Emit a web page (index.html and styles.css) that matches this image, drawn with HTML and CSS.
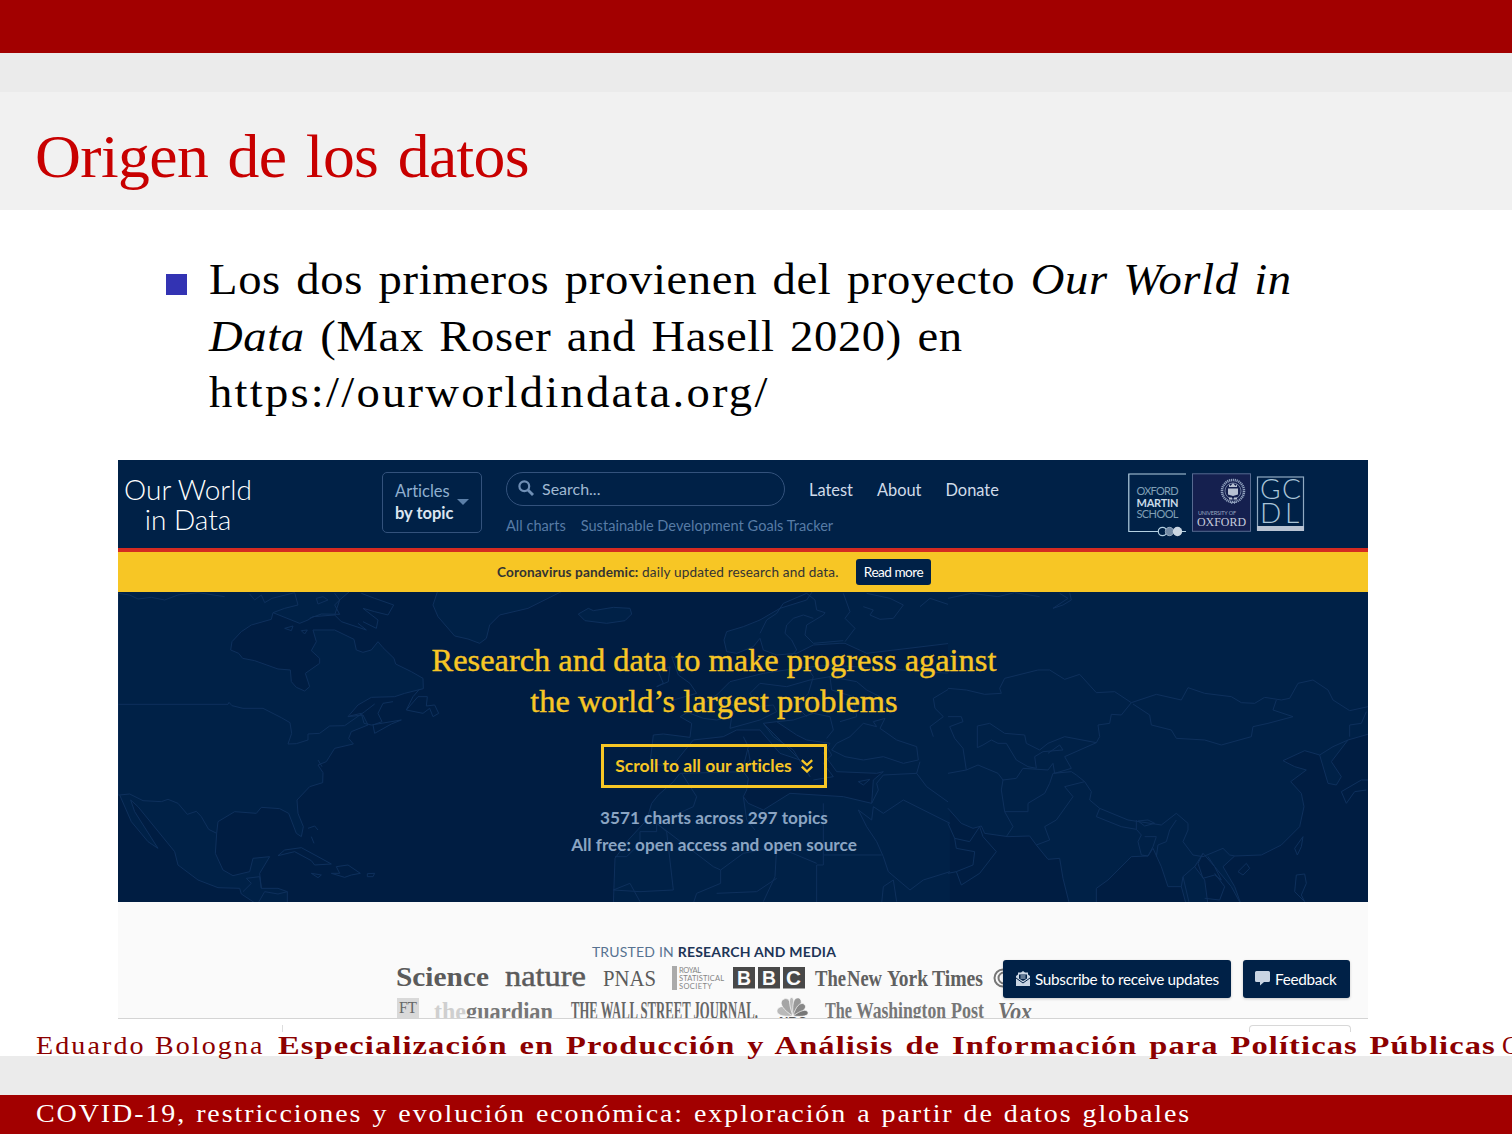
FILE: index.html
```html
<!DOCTYPE html>
<html lang="es">
<head>
<meta charset="utf-8">
<title>Origen de los datos</title>
<link rel="stylesheet" href="styles.css">
</head>
<body>
<main class="slide">
  <div class="bar-top"></div>
  <div class="bar-sub"></div>
  <header class="title-band"><h1>Origen de los datos</h1></header>

  <section class="content">
    <span class="bullet"></span>
    <p class="statement">
      <span class="line l1">Los dos primeros provienen del proyecto <em>Our World in</em></span>
      <span class="line l2"><em>Data</em> (Max Roser and Hasell 2020) en</span>
      <span class="line l3">https://ourworldindata.org/</span>
    </p>
  </section>

  <section class="site">
    <div class="site-head">
      <div class="brand">Our World<br>in Data</div>
      <div class="topic">
        <div class="topic-text"><span>Articles</span><b>by topic</b></div>
        <svg class="caret" width="12" height="6" viewBox="0 0 12 6"><path d="M0 0h12L6 6z" fill="#5b7fa8"/></svg>
      </div>
      <div class="search-col">
        <div class="search">
          <svg width="16" height="16" viewBox="0 0 16 16" fill="none" stroke="#6f8fb5"><circle cx="6.3" cy="6.3" r="4.9" stroke-width="2.2"/><path d="M10 10l5 5" stroke-width="2.8"/></svg>
          <span>Search...</span>
        </div>
        <div class="sub"><span class="charts">All charts</span><span class="sdg">Sustainable Development Goals Tracker</span></div>
      </div>
      <nav class="nav"><span>Latest</span><span>About</span><span>Donate</span></nav>
      <svg class="partners" width="178" height="66" viewBox="0 0 178 66">
        <g fill="none" stroke="#b4d0e2" stroke-width="1.2"><path d="M58 1H.8V58.500H30M54 58.500h4"/><circle cx="34.500" cy="58.500" r="4.200"/></g>
        <circle cx="41.500" cy="58.500" r="4.200" fill="#738aa5" stroke="#b4c5d5" stroke-width=".7"/>
        <circle cx="49.500" cy="58.500" r="4.700" fill="#cbd6e2"/>
        <g font-family="Lato, sans-serif" font-size="11" fill="#7f9fb5">
          <text x="8.500" y="22" textLength="42">OXFORD</text>
          <text x="8.500" y="34" textLength="42" font-weight="700" fill="#c9dae8">MARTIN</text>
          <text x="8.500" y="45" textLength="42">SCHOOL</text>
        </g>
        <rect x="64.500" y=".8" width="58" height="57.500" fill="#15204f" stroke="#566a90"/>
        <g fill="none" stroke="#8fa0bd"><circle cx="105" cy="18" r="11" stroke-width="2.600" stroke-dasharray="1.200 .7"/><circle cx="105" cy="18" r="8" stroke-width=".7"/><path d="M101.500 29.500h7M103 31l2-2 2 2" stroke-width=".8"/></g>
        <path d="M101 11l1.500 2 2.500-3 2.500 3 1.500-2v3h-8zM100 15.500h10v6l-5 1.500-5-1.500zM101 24.500h3v2h-3zM106 24.500h3v2h-3z" fill="#b7c1d2"/>
        <g font-family="Liberation Serif, serif" fill="#c5cbdc">
          <text x="70" y="42" font-size="5.500" font-family="Lato, sans-serif" fill="#9aa5c0" textLength="38">UNIVERSITY OF</text>
          <text x="69" y="52.500" font-size="12" textLength="49" lengthAdjust="spacingAndGlyphs">OXFORD</text>
        </g>
        <rect x="129.500" y="4" width="46" height="53" fill="none" stroke="#8fa9c1" stroke-width="1.200"/>
        <rect x="129" y="53" width="47" height="5" fill="#b9c3d3"/>
        <g font-family="Lato, sans-serif" font-weight="300" font-size="28" fill="#a9c4d8">
          <text x="132" y="26">G</text><text x="154" y="26">C</text><text x="132" y="50">D</text><text x="157" y="50">L</text>
        </g>
      </svg>
    </div>
    <div class="notice"><span class="note"><b>Coronavirus pandemic:</b> daily updated research and data.</span><span class="more">Read more</span></div>

    <div class="hero">
      <svg class="map" width="1250" height="310" viewBox="0 0 1250 310" aria-hidden="true">
        <g transform="translate(0 -2) scale(.33333)">
          <path class="land" d="M0 0H700L665 30 650 75 585 80 570 90 545 100 465 68 460 88 400 105 370 125 342 155 338 180 362 190 374 205 410 212 480 237 517 240 520 275 535 292 560 303 575 290 562 250 605 220 605 205 580 182 595 155 585 120 650 120 708 148 715 180 735 187 760 180 780 155 795 173 828 205 833 222 880 245 915 265 916 296 860 310 830 320 760 322 720 345 690 380 735 375 750 405 700 425 692 445 706 462 650 475 625 515 600 525 615 548 614 578 575 590 537 630 540 670 556 710 550 740 535 730 512 670 485 656 430 652 415 670 350 665 300 695 296 730 292 790 315 840 345 857 395 845 405 805 455 800 425 850 430 895 480 895 508 905 508 945H420L370 912 365 895 300 893 240 870 180 825 170 785 60 650 38 630 50 665 120 775 90 755 40 695 5 615H0Z"/>
          <path class="coast" d="M0 343H330L333 337 342 347 375 355H435L490 383 516 398 521 430 510 462 535 461 570 450V432L605 430 635 408 680 407 740 365 770 342M5 615 35 612 75 632 130 635 150 628 180 640 208 673 235 664 250 680 272 718 296 730M0 10 35 15 60 27 100 22 140 30 180 15 240 8 320 20M395 12 410 30 430 15 440 38 462 25 530 8 540 45 500 55 465 68M595 25 615 20 630 30 600 42ZM575 85 610 72 665 73 650 45 665 30 650 10M735 55 770 65 810 75 827 45 770 25 730 10M735 55 780 90 775 115 735 95M650 75 670 95 745 120 720 100M500 115 525 108 520 122ZM550 122 568 120 560 132ZM695 378 730 370 738 400 760 405 850 390 820 402 770 430 765 405 792 395 780 370 795 340 825 335M865 360 885 320 905 297M865 360 915 370 935 355 945 380 962 370 950 345 925 348 928 320 900 320ZM480 797 500 780 550 773 600 800 640 822 590 825 580 812 530 785ZM655 830 690 825 727 850 700 855 680 862 640 850 665 850ZM580 850 610 855 600 863ZM748 851 770 850 765 860H748ZM570 715 590 708 600 720M580 740 588 760M375 905 400 880 385 865 425 860 430 895M420 940 440 905 480 912 508 905M600 510 612 530"/>
          <path class="land" d="M960 0 945 45 960 80 1010 138 1050 147 1085 160 1105 145 1115 105 1145 75 1230 55 1340 0Z"/>
        </g>
        <g transform="translate(412 -2) scale(.33333)">
          <path class="land" d="M1260 0H850L830 30 750 55 690 90 640 110 590 125 582 150 590 185 620 190 670 170 690 145 700 180 740 195 800 190 850 165 930 160 945 160 1010 190 1260 160"/>
          <path class="land" d="M145 72 175 55 190 62 250 52 300 55 305 72 285 92 230 100 165 92Z"/>
          <path class="land" d="M1260 945H250L255 805 295 750 350 690 365 640 385 615 430 575 450 550 640 545 655 565 650 600 640 620 655 640 700 660 780 610 940 620 1025 640 1030 570 1060 545 1040 550 920 545 880 490 900 460 830 450 800 435 740 395 700 400 800 500 810 510 750 490 690 420 620 420 580 440 490 450 425 530 360 520 370 435 400 432 480 442 485 400 450 380 520 340 560 315 600 275 700 250 800 235 900 225 1260 250"/>
          <path class="coast" d="M770 105 790 85 820 75 850 85M770 105 765 130 785 150 800 180 780 200M855 30 860 60 885 68 880 75 830 105 825 135 850 160 940 152M690 130 710 90 740 70 760 40 830 10 855 30M940 10 960 65 945 85 975 115 945 155M1000 50 1030 60 1020 75 1050 88 1090 85 1120 45 1080 25 1010 10M1170 50 1200 25 1260 45M380 290 400 280 385 245 420 230 415 275ZM430 330 500 310 480 280 445 255 425 200 450 210 450 250M480 370 520 385 560 390 605 380 620 350 570 330 530 320M605 380 600 415 690 390 740 365 730 345 680 350 660 310 690 280 770 290 840 270 900 260 980 275 1010 300 1050 320 1090 370M740 395 790 390 850 370 900 380 910 420 890 445M830 230 850 260 835 310 800 350 830 380M900 260 905 300 970 320 980 380 930 395M1210 440 1200 410 1240 380 1215 355 1210 325 1260 295M920 460 960 440 1000 400 1040 410 1030 395 1065 385 1050 415 1100 450 1160 470 1165 510 1120 520 1060 500 1000 510 945 500 905 480ZM885 460 905 495 880 520 910 560 850 570M640 440 655 470 640 530 660 510 655 480M700 400 730 440 790 480 820 530 840 560 815 510M985 575 1020 568 1000 585ZM1025 640 1045 600 1040 580 1060 555 1160 550 1170 515M1030 650 1060 670 1120 630 1260 700M1030 650 1025 690 985 660 1010 710 1040 755 1060 800 1075 845 1140 900 1180 870 1260 845M880 640V825H860V940M880 795H1055M455 550 500 620 490 650 380 700 380 725H330V760L290 800H255M380 700 550 830 572 840 640 790 740 770 735 860 700 935M380 700 410 725 430 900 330 905 250 900M572 840 572 880 500 910 490 940M640 620 650 690 675 720M740 770 860 820M740 865 680 905 560 910M1055 940 1060 890 1090 870 1100 935M250 900 300 880 330 935M1160 550 1190 590 1260 640"/>
        </g>
        <g transform="translate(830 -2) scale(.33333)">
          <path class="land" d="M0 655L40 700 75 715 100 708 110 730 180 740 245 738 265 765 300 808 335 805 345 865 365 945H445V895L480 870 550 800 600 798 615 775 640 830 660 890 700 890 715 945H780L770 870 740 830 765 790 800 830 850 890 880 945 860 890 825 830 860 798 940 795 1000 765 1055 710 1068 650 1060 610 1028 575 1075 540 1040 530 1005 512 1070 482 1115 495 1140 580 1165 585 1180 560 1150 515 1200 450 1270 430V0H0"/>
          <path class="coast" d="M0 25 70 10 150 20 200 8 275 20M335 10 360 25 315 55 345 45 370 30 365 8M0 295 55 300 110 313 160 310 155 295 170 265 270 240 305 240 350 268 395 253 445 308 500 305 550 338 625 313 700 330 720 293 770 310 850 320 880 338 920 340 950 322 1000 330 1025 325 1050 280 1095 270 1140 300 1155 330 1205 362 1260 350M550 338 520 375 490 373 485 400 450 405 455 440 445 458 350 440 300 460 275 480 235 460 230 435 170 430 125 400 88 408V473M555 342 605 375 610 405 670 420 685 445 770 450 820 465 910 440 915 410 960 400 1035 380 975 360 985 330M0 380 40 380 45 395 5 410 20 445 45 475 55 540 0 550M55 540 90 525 150 550 165 570 205 565 225 535 300 540 315 520 320 550 370 535 350 500 445 458M88 473 105 465 130 450 150 460 175 460 205 510 240 530 265 535 260 500 285 485 345 480 335 465 300 490M165 570 160 600 170 665 240 665 240 640 290 610 305 580 315 550 370 545 385 555 410 575 350 590 375 620 325 690 290 710 305 750 265 765M170 665 195 710 175 740M410 575 430 605 425 630 455 655 540 690 640 705 685 670 720 700 720 720 705 755 735 795 765 800 825 775 845 795 860 798M455 655 445 680 520 710 565 718V690M570 693 590 708 620 700 600 690ZM565 718 580 735 570 755 580 795 600 798 615 770 625 740 590 740M685 690 665 720 655 755 630 765 625 800M765 790 750 820 765 865 800 855 820 870 800 830 780 800M705 860 745 825M700 890 705 860 725 945M800 850 830 890 815 930 770 925M0 700 20 745 65 755 95 710 105 740 145 785 95 850 40 885 25 845 0 850M20 745 25 775 80 785 75 825 25 845M870 845 895 820 905 835 885 855ZM1040 775 1065 740 1060 770 1048 795ZM1045 855 1070 852 1075 880 1060 915 1070 935 1040 905ZM1180 605 1240 570H1260M1180 605 1195 640 1220 605 1255 600M1205 440V405L1240 400 1255 365M1115 495 1155 470 1200 450"/>
        </g>
      </svg>
      <div class="hero-copy">
        <h2><span class="h-a">Research and data to make progress against</span><br><span class="h-b">the world’s largest problems</span></h2>
        <div class="scroll"><span>Scroll to all our articles</span><svg width="12" height="14" viewBox="0 0 12 14" fill="none" stroke="#f7c625" stroke-width="2.300"><path d="M.8 1.200L6 6l5.200-4.800M.8 7.700L6 12.500l5.200-4.800"/></svg></div>
        <p><span class="p-a">3571 charts across 297 topics</span><br><span class="p-b">All free: open access and open source</span></p>
      </div>
    </div>

    <div class="trusted">
      <div class="trusted-title">TRUSTED IN <b>RESEARCH AND MEDIA</b></div>
      <svg class="press" width="650" height="56" viewBox="0 0 650 56">
        <g font-family="Liberation Serif, serif" fill="#5b5b5b">
          <text x="0" y="24" font-size="27" font-weight="700" textLength="93" lengthAdjust="spacingAndGlyphs">Science</text>
          <text x="109" y="24" font-size="30" stroke="#5b5b5b" stroke-width=".5" textLength="81" lengthAdjust="spacingAndGlyphs">nature</text>
          <text x="207" y="24" font-size="24" textLength="53" lengthAdjust="spacingAndGlyphs">PNAS</text>
          <rect x="276" y="4" width="5" height="24" fill="#aaa"/>
          <g font-family="Lato, sans-serif" font-size="7.500" fill="#858585"><text x="283" y="11" textLength="22">ROYAL</text><text x="283" y="19" textLength="45">STATISTICAL</text><text x="283" y="27" textLength="33">SOCIETY</text></g>
          <g fill="#484848"><rect x="337" y="5" width="22" height="21.500"/><rect x="362" y="5" width="22" height="21.500"/><rect x="387" y="5" width="22" height="21.500"/></g>
          <g font-family="Liberation Sans, sans-serif" font-weight="700" font-size="21" fill="#fafafa"><text x="341" y="23" textLength="14" lengthAdjust="spacingAndGlyphs">B</text><text x="366" y="23" textLength="14" lengthAdjust="spacingAndGlyphs">B</text><text x="390" y="23" textLength="15" lengthAdjust="spacingAndGlyphs">C</text></g>
          <g font-weight="700" font-size="23" fill="#606060"><text x="419" y="24" textLength="31" lengthAdjust="spacingAndGlyphs">The</text><text x="451" y="24" textLength="35" lengthAdjust="spacingAndGlyphs">New</text><text x="491" y="24" textLength="41" lengthAdjust="spacingAndGlyphs">York</text><text x="536" y="24" textLength="51" lengthAdjust="spacingAndGlyphs">Times</text></g>
          <g fill="none" stroke="#777" stroke-width="2"><circle cx="607" cy="16" r="8.500"/><circle cx="608" cy="16" r="5.500"/></g>
          <rect x="1" y="36" width="22" height="24" fill="#d9d9d9"/>
          <text x="3" y="51" font-size="16" fill="#666" textLength="18" lengthAdjust="spacingAndGlyphs">FT</text>
          <text x="38" y="58" font-size="25" font-weight="700" fill="#cfcfcf" textLength="32" lengthAdjust="spacingAndGlyphs">the</text>
          <text x="70" y="58" font-size="25" font-weight="700" fill="#777" textLength="87" lengthAdjust="spacingAndGlyphs">guardian</text>
          <text x="175" y="57" font-size="25" font-weight="700" fill="#666" textLength="187" lengthAdjust="spacingAndGlyphs">THE WALL STREET JOURNAL.</text>
          <g stroke="#fafafa" stroke-width=".7"><path d="M397 54C380 56 378 48 384 45c5-2 9 2 13 9z" fill="#b9b9b9"/><path d="M397 54C384 46 383 39 388 37c5-2 8 4 9 17z" fill="#a5a5a5"/><path d="M397 54C394 46 392 37 395 35.500c3-.8 4 5 2 18.500z" fill="#bbb"/><path d="M397 54C396 40 398 35 403 36c4 2 3 9-6 18z" fill="#999"/><path d="M397 54c3-10 7-14 11-12 4 3 0 8-11 12z" fill="#888"/><path d="M397 54c8-6 13-7 15-4 1 4-5 5-15 4z" fill="#777"/></g>
          <text x="383" y="64" font-family="Liberation Sans, sans-serif" font-size="13" font-weight="700" textLength="28" lengthAdjust="spacingAndGlyphs">NBC</text>
          <g font-weight="700" font-size="23" fill="#777"><text x="429" y="56" textLength="27" lengthAdjust="spacingAndGlyphs">The</text><text x="460" y="56" textLength="90" lengthAdjust="spacingAndGlyphs">Washington</text><text x="555" y="56" textLength="33" lengthAdjust="spacingAndGlyphs">Post</text></g>
          <text x="602" y="58" font-size="26" font-weight="700" font-style="italic" fill="#707070" textLength="34" lengthAdjust="spacingAndGlyphs">Vox</text>
        </g>
      </svg>
      <div class="actions">
        <div class="btn subscribe"><svg width="14" height="15" viewBox="0 0 14 15"><path d="M0 5l2-1.500V1.500h3L7 0l2 1.500h3v2L14 5v10H0z" fill="#c9d5e3"/><path d="M3 3.500h8v4L7 10 3 7.500z" fill="#002147"/><path d="M4.500 5h5M4.500 7h5" stroke="#c9d5e3"/><path d="M0 7l7 5 7-5" fill="none" stroke="#002147"/></svg><span>Subscribe to receive updates</span></div>
        <div class="btn feedback"><svg width="15" height="15" viewBox="0 0 15 15"><path d="M1.500 0h12Q15 0 15 1.500v8q0 1.500-1.500 1.500H9l-4 3.500V11H1.500Q0 11 0 9.500v-8Q0 0 1.500 0z" fill="#c9d5e3"/></svg><span>Feedback</span></div>
      </div>
    </div>
    <div class="below"><i class="tick"></i><i class="box"></i></div>
  </section>

  <div class="credits"><span class="author">Eduardo Bologna</span><b class="course">Especialización en Producción y Análisis de Información para Políticas Públicas</b><span class="cut">C</span></div>
  <div class="bar-low"></div>
  <footer class="bar-foot"><span>COVID-19, restricciones y evolución económica: exploración a partir de datos globales</span></footer>
</main>
</body>
</html>
```
FILE: styles.css
```css
* { box-sizing: border-box; }
body { margin: 0; background: #fff; }
.slide { width: 1512px; height: 1134px; overflow: hidden; display: flex; flex-direction: column; font-family: "Liberation Serif", serif; color: #000; }
.slide > * { flex: none; }
.bar-top { height: 53px; background: #a20000; }
.bar-sub { height: 39px; background: #ebebeb; }
.title-band { height: 118px; background: #f1f1f1; padding: 29px 0 0 35px; }
h1 { margin: 0; font-size: 62px; line-height: 70px; font-weight: 400; color: #c80000; letter-spacing: -.6px; word-spacing: 4px; white-space: nowrap; transform: scaleX(1.027); transform-origin: left; }

.content { height: 250px; padding: 42px 0 0 166px; display: flex; align-items: flex-start; }
.bullet { width: 21px; height: 21px; background: #3333b3; margin: 22px 22px 0 0; flex: none; }
.statement { margin: 0; font-size: 44px; line-height: 56.5px; white-space: nowrap; }
.line { display: block; transform: scaleX(1.06); transform-origin: left; }
.l1 { letter-spacing: .6px; word-spacing: 3px; }
.l2 { letter-spacing: .6px; word-spacing: 3px; }
.l3 { letter-spacing: 2.1px; }

.site { width: 1250px; margin-left: 118px; font-family: Lato, sans-serif; height: 572px; font-variant-ligatures: none; }
.site-head { height: 92px; background: #002147; border-bottom: 4px solid #d42b21; display: flex; align-items: flex-start; padding: 12px 0 0 6px; }
.brand { width: 128px; font-size: 28px; font-weight: 300; line-height: 30px; color: #fff; text-align: center; padding-top: 2px; white-space: nowrap; }
.topic { width: 100px; height: 61px; margin-left: 130px; border: 1px solid #33527c; border-radius: 5px; display: flex; align-items: center; padding: 0 0 2px 12px; gap: 3px; font-size: 16.5px; color: #8fafcf; }
.topic-text { display: flex; flex-direction: column; line-height: 22px; width: 59px; white-space: nowrap; }
.topic-text b { color: #dbe5f0; font-size: 16.5px; }
.search-col { width: 303px; margin-left: 24px; }
.search { width: 279px; height: 34px; border: 1px solid #33527c; border-radius: 17px; display: flex; align-items: center; gap: 8px; padding: 0 0 2px 11px; font-size: 16px; color: #a0b9d2; }
.sub { display: flex; gap: 15px; margin-top: 10px; font-size: 14.6px; line-height: 20px; color: #577ba5; white-space: nowrap; }
.nav { display: flex; gap: 24px; font-size: 16.4px; line-height: 35px; color: #d0dcea; width: 319px; }
.partners { margin-top: 1px; }
.notice { height: 40px; background: #f7c625; display: flex; align-items: center; padding-left: 379px; font-size: 13.6px; color: #333; white-space: nowrap; }
.note { width: 359px; letter-spacing: .14px; }
.more { width: 75px; height: 26px; line-height: 26px; border-radius: 3px; background: #002147; color: #fff; text-align: center; letter-spacing: -.5px; }

.hero { position: relative; height: 310px; background: #001d42; }
.map { position: absolute; left: 0; top: 0; }
.land { fill: #002147; stroke: #0e305c; stroke-width: 3; }
.coast { fill: none; stroke: #0e305c; stroke-width: 3; }
.hero-copy { position: relative; width: 1192px; padding-top: 48px; display: flex; flex-direction: column; align-items: center; }
h2 { margin: 0; font: 400 32.4px/41px "Liberation Serif", serif; color: #f7c625; text-align: center; -webkit-text-stroke: .4px #f7c625; white-space: nowrap; }
.scroll { width: 226px; height: 44px; margin-top: 22px; border: 3px solid #f7c625; display: flex; align-items: center; justify-content: center; gap: 9px; padding-bottom: 1px; font-size: 17.5px; font-weight: 700; color: #f7c625; white-space: nowrap; }
.hero p { margin: 16px 0 0; font-size: 17.2px; line-height: 27px; font-weight: 700; color: #8ba5c3; text-align: center; }

.trusted { position: relative; height: 117px; background: #fafafa; border-bottom: 1px solid #d4d4d4; }
.trusted-title { width: 1192px; padding-top: 41px; font-size: 14px; line-height: 18px; text-align: center; color: #577291; letter-spacing: .2px; }
.trusted-title b { color: #1d3557; font-weight: 700; }
.press { display: block; margin: 1px 0 0 278px; }
.actions { position: absolute; left: 885px; top: 58px; display: flex; gap: 12px; }
.btn { height: 38px; border-radius: 3px; background: #002147; color: #fff; display: flex; align-items: center; gap: 5px; padding: 0 0 1px 13px; font-size: 15.3px; letter-spacing: -.3px; white-space: nowrap; box-shadow: 0 1px 3px #0003; }
.btn svg { flex: none; }
.subscribe { width: 228px; }
.feedback { width: 107px; padding-left: 12px; }
.below { display: flex; justify-content: space-between; padding: 6px 17px 0 164px; }
.tick { width: 1px; height: 7px; background: #ddd; }
.box { width: 102px; height: 7px; border: 1px solid #d8d8d8; border-bottom: 0; border-radius: 4px 4px 0 0; }

.credits { height: 24px; padding-left: 36px; display: flex; line-height: 28px; font-size: 25px; color: #8c0000; white-space: nowrap; position: relative; }
.credits > * { transform-origin: left; flex: none; }
.author { width: 242px; letter-spacing: 1.9px; transform: scaleX(1.12); }
.course { width: 1224px; letter-spacing: .85px; word-spacing: 2px; transform: scaleX(1.3); }
.bar-low { height: 39px; background: #ebebeb; }
.bar-foot { height: 39px; background: #a20000; color: #fff; padding-left: 36px; font-size: 25px; line-height: 37px; white-space: nowrap; }
.bar-foot span { display: inline-block; letter-spacing: 1.7px; word-spacing: 1px; transform: scaleX(1.12); transform-origin: left; }
```
